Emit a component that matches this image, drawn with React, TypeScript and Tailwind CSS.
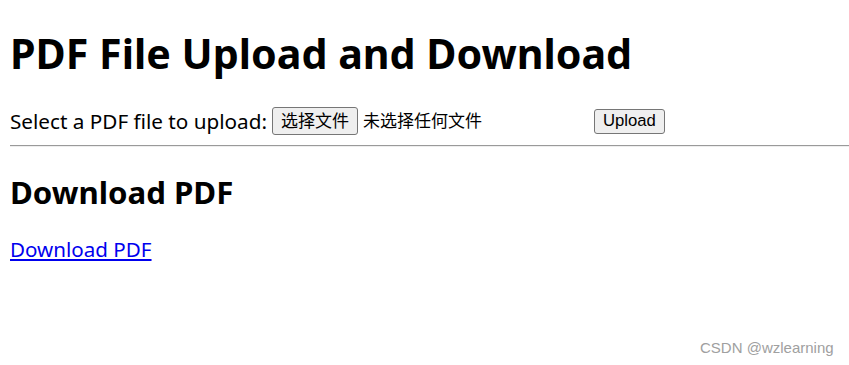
export default function App() {
  return (
    <div
      className="relative w-[849px] h-[365px] overflow-hidden bg-white text-black px-[10px]"
      style={{ fontFamily: '"Noto Sans", "Noto Sans CJK SC", sans-serif' }}
    >
      <h1 className="text-[41.2px] font-bold leading-[52px] pt-[27px] mb-[27px]">
        PDF File Upload and Download
      </h1>
      <div className="flex items-center h-[30px] text-[20.7px] leading-[26px]">
        <span>Select a PDF file to upload:</span>
        <span className="ml-[5px] flex items-center w-[318px]">
          <span className="h-[28px] px-[8px] flex items-center border border-[#767676] rounded-[3px] bg-[#efefef] text-[17px]">
            选择文件
          </span>
          <span className="ml-[5px] text-[17px]">未选择任何文件</span>
        </span>
        <span className="ml-[4px] h-[25px] px-[8px] flex items-center border border-[#767676] rounded-[3px] bg-[#efefef] text-[16.7px]" style={{ fontFamily: '"Liberation Sans", Arial, sans-serif' }}>
          Upload
        </span>
      </div>
      <div className="mt-[9px] border-t border-t-[#9a9a9a] border-b border-b-[#eeeeee] h-[2px] -mr-[10px]" />
      <h2 className="text-[31.2px] font-bold leading-[40px] mt-[25px]">Download PDF</h2>
      <p className="mt-[24px] text-[20.6px] leading-[26px]">
        <a className="text-[#0000ee] underline">Download PDF</a>
      </p>
      <div
        className="absolute left-[700px] top-[337px] text-[15px] text-[#a0a0a0]"
        style={{ fontFamily: '"Liberation Sans", Arial, sans-serif' }}
      >
        CSDN @wzlearning
      </div>
    </div>
  );
}
